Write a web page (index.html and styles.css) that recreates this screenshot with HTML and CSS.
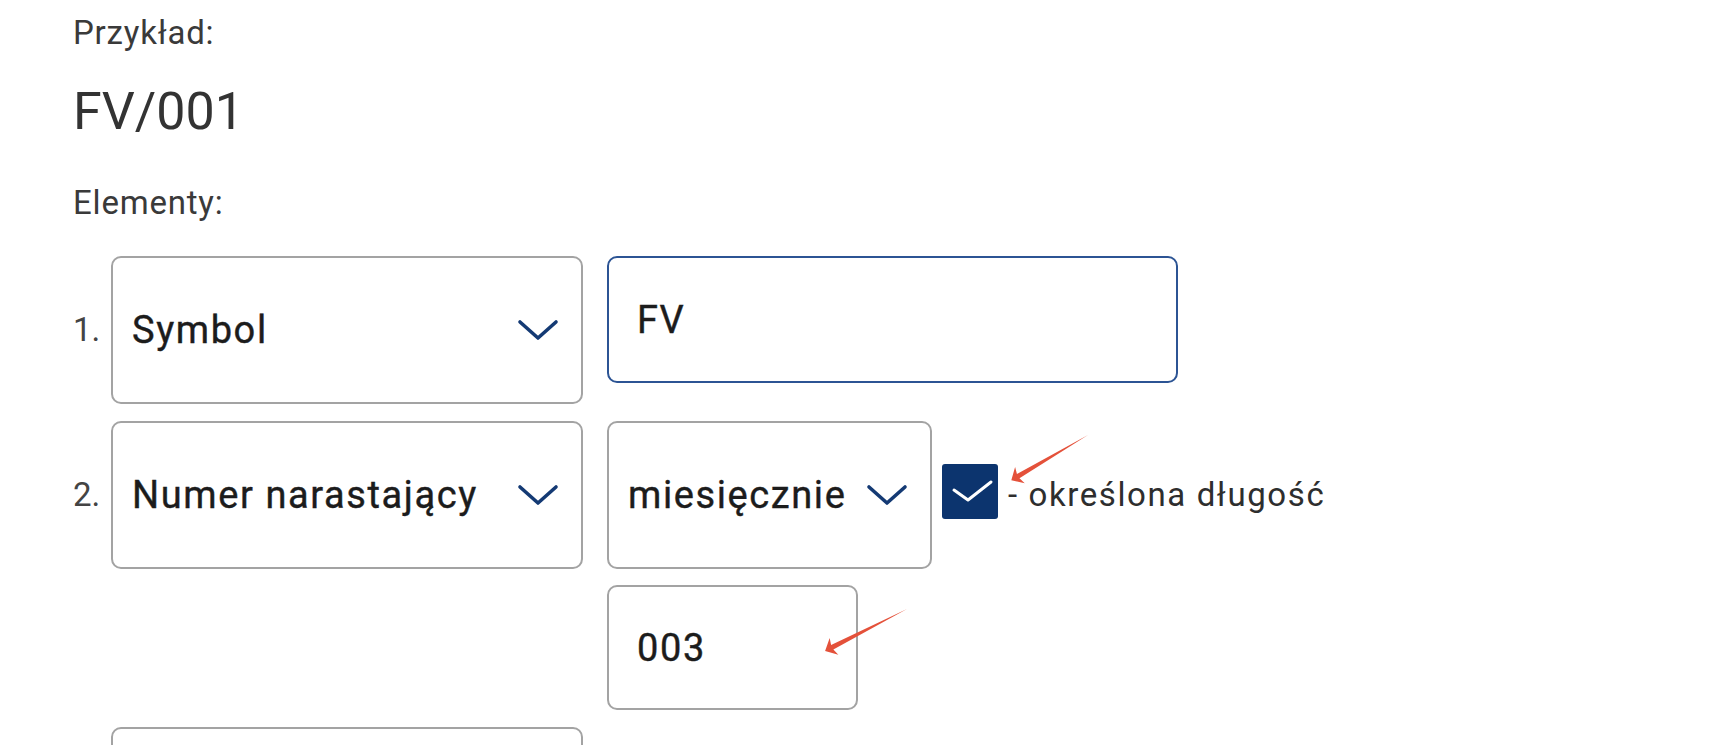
FILE: index.html
```html
<!DOCTYPE html>
<html lang="pl">
<head>
<meta charset="utf-8">
<title>Numeracja</title>
<link rel="stylesheet" href="styles.css">
</head>
<body>
<div class="page">
  <div class="label">Przykład:</div>
  <div class="example">FV/001</div>
  <div class="label label-elements">Elementy:</div>

  <div class="rows">
    <div class="row">
      <span class="num">1.</span>
      <div class="select wide">
        <span>Symbol</span>
        <svg class="chev" viewBox="0 0 42 22"><path d="M3 3 L21 19 L39 3"/></svg>
      </div>
      <div class="input focused"><span>FV</span></div>
    </div>

    <div class="row">
      <span class="num">2.</span>
      <div class="select wide">
        <span>Numer narastający</span>
        <svg class="chev" viewBox="0 0 42 22"><path d="M3 3 L21 19 L39 3"/></svg>
      </div>
      <div class="select mid">
        <span>miesięcznie</span>
        <svg class="chev" viewBox="0 0 42 22"><path d="M3 3 L21 19 L39 3"/></svg>
      </div>
      <div class="check-wrap">
        <span class="checkbox">
          <svg viewBox="0 0 56 55"><path d="M12 26 L26 36 L49 18"/></svg>
        </span>
        <span class="check-label">- określona długość</span>
      </div>
    </div>

    <div class="row sub">
      <div class="input small"><span>003</span></div>
    </div>

    <div class="row">
      <span class="num"></span>
      <div class="select wide"></div>
    </div>
  </div>

  <svg class="annot" viewBox="0 0 1724 745">
    <polygon transform="translate(1088 435) rotate(149.5)" points="0,0 81,-2.5 79,-9.5 89,0 79,9.5 81,2.5"/>
    <polygon transform="translate(907 609) rotate(152.9)" points="0,0 84,-2.5 82,-9.5 92,0 82,9.5 84,2.5"/>
  </svg>
</div>
</body>
</html>
```

FILE: styles.css
```css
html, body {
  margin: 0;
  padding: 0;
  background: #ffffff;
}

.page {
  position: relative;
  width: 1724px;
  height: 745px;
  overflow: hidden;
  padding: 13px 0 0 73px;
  box-sizing: border-box;
  font-family: Roboto, "Noto Sans", sans-serif;
  color: #2b2b2b;
}

.label {
  font-size: 33px;
  line-height: 40px;
  color: #3a3a3a;
  letter-spacing: 0.8px;
}

.example {
  margin-top: 29px;
  font-size: 52px;
  line-height: 60px;
  color: #333333;
}

.label-elements {
  margin-top: 41px;
}

.rows {
  margin-top: 33px;
  display: flex;
  flex-direction: column;
  gap: 17px;
}

.row {
  display: flex;
  align-items: flex-start;
}

.row.sub {
  padding-left: 534px;
  margin-top: -1px;
}

.num {
  width: 38px;
  flex: none;
  font-size: 33px;
  line-height: 148px;
  color: #444444;
}

.select,
.input {
  box-sizing: border-box;
  border: 2px solid #a3a3a3;
  border-radius: 10px;
  display: flex;
  align-items: center;
  font-size: 38px;
  font-weight: 400;
  color: #1c1c1c;
  letter-spacing: 1.6px;
  flex: none;
  -webkit-text-stroke: 0.4px #1c1c1c;
}

.select {
  height: 148px;
  padding: 0 22px 0 19px;
  justify-content: space-between;
}

.select.wide {
  width: 472px;
}

.select.mid {
  width: 325px;
  margin-left: 24px;
}

.input {
  padding-left: 28px;
}

.input.focused {
  margin-left: 24px;
  width: 571px;
  height: 127px;
  border-color: #2c5494;
}

.input.small {
  width: 251px;
  height: 125px;
}

.chev {
  width: 42px;
  height: 22px;
  flex: none;
}

.chev path {
  fill: none;
  stroke: #143a74;
  stroke-width: 3.6;
  stroke-linecap: round;
  stroke-linejoin: round;
}

.check-wrap {
  align-self: center;
  display: flex;
  align-items: center;
  margin-left: 10px;
  margin-top: -8px;
}

.checkbox {
  width: 56px;
  height: 55px;
  background: #0c346e;
  border-radius: 3px;
  display: block;
  flex: none;
}

.checkbox svg {
  display: block;
  width: 56px;
  height: 55px;
}

.checkbox path {
  fill: none;
  stroke: #ffffff;
  stroke-width: 3;
  stroke-linecap: round;
  stroke-linejoin: round;
}

.check-label {
  margin-left: 10px;
  font-size: 33px;
  color: #2e2e2e;
  letter-spacing: 1.6px;
  margin-top: 6px;
}

.annot {
  position: absolute;
  left: 0;
  top: 0;
  width: 1724px;
  height: 745px;
  pointer-events: none;
}

.annot polygon {
  fill: #e4513a;
}
```
